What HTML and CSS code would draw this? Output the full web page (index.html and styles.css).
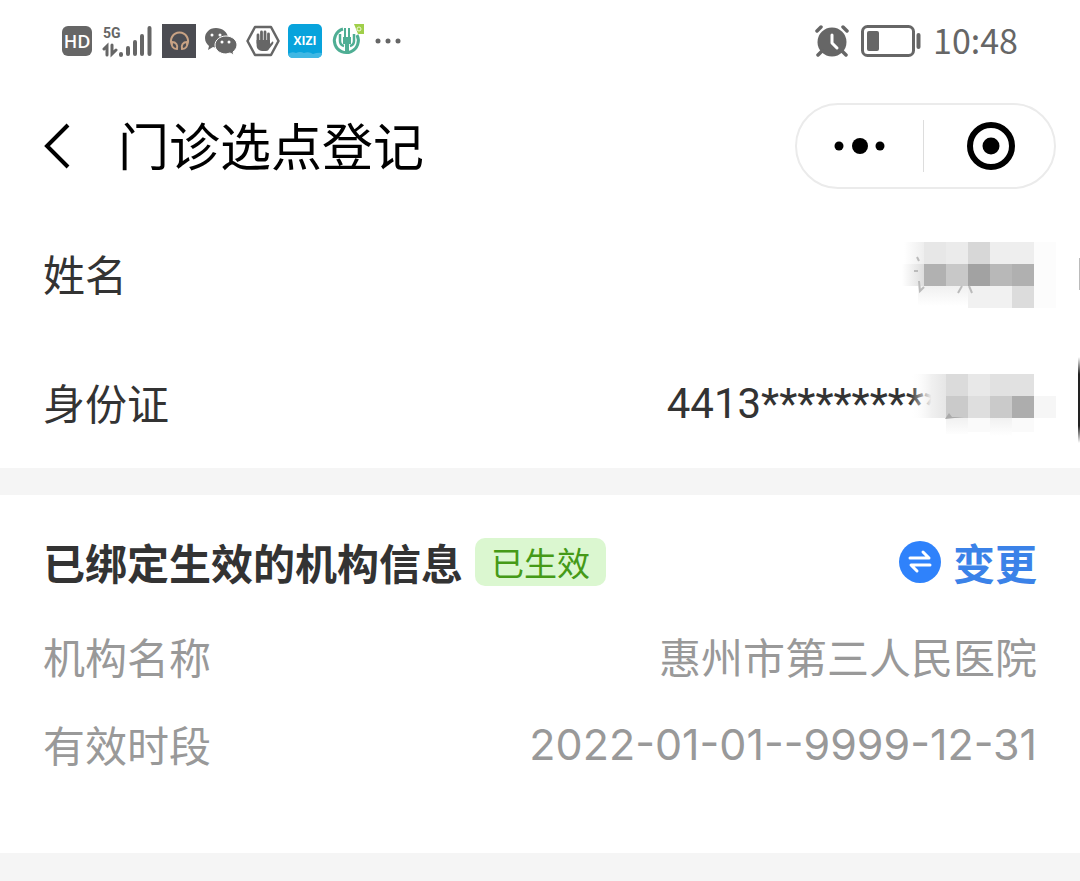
FILE: index.html
```
<!DOCTYPE html>
<html lang="zh-CN">
<head>
    <meta charset="UTF-8">
    <meta name="viewport" content="width=device-width, initial-scale=1.0">
    <title>门诊选点登记</title>
    <link rel="stylesheet" href="styles.css">
</head>

<body>
    <div class="statusbar">
        <div class="status-left">
            <svg width="30" height="30" viewBox="0 0 30 30">
                <rect width="30" height="30" rx="6" fill="#666"/>
                <text class="hd" x="15" y="22" text-anchor="middle">HD</text>
            </svg>
            <svg class="signal" width="50" height="36" viewBox="0 0 50 36">
                <text class="five-g" x="1" y="15">5G</text>
                <g fill="none" stroke="#666" stroke-linecap="round">
                    <path d="M5 32V23L2 26M10 22v9l4-4" stroke-width="3"/>
                    <path d="M19 32v-1M26 31v-6M33 31V19M40 31V13M47.500 31V5" stroke-width="4"/>
                </g>
            </svg>
            <svg width="34" height="34" viewBox="0 0 34 34">
                <rect width="34" height="34" fill="#4b4c52"/>
                <g fill="none" stroke="#c8a284" stroke-width="2">
                    <path d="M10 21a8.500 8.500 0 1 1 15 0"/>
                    <path d="M10 18c4 0 6 3 5 7c-4 0-6-3-5-7zM25 18c-4 0-6 3-5 7c4 0 6-3 5-7z"/>
                </g>
            </svg>
            <svg width="34" height="34" viewBox="0 0 34 34">
                <path fill="#666" d="M12 4C5 4 1 9 1 14c0 4 2 6 4 8l-1 4 5-3 4 1c6 0 11-4 11-10S18 4 12 4z"/>
                <path fill="#666" stroke="#fff" stroke-width="1" d="M22 12c-6 0-11 4-11 9s5 9 11 9l4-1 4 2-1-3c2-2 4-4 4-7 0-5-5-9-11-9z"/>
                <g fill="#fff">
                    <circle cx="8" cy="11" r="1.500"/>
                    <circle cx="16" cy="11" r="1.500"/>
                    <circle cx="18" cy="18" r="1.500"/>
                    <circle cx="25" cy="18" r="1.500"/>
                </g>
            </svg>
            <svg width="34" height="34" viewBox="0 0 34 34">
                <path d="M9 3h16l7.500 14L25 31H9L1.500 17z" fill="none" stroke="#666" stroke-width="2.500" stroke-linejoin="round"/>
                <path d="M12 19V11M15.500 18V8M19 18V8M22.500 19v-9" stroke="#666" stroke-width="2.800" stroke-linecap="round"/>
                <path fill="#666" d="M10.600 16h13.400v4l2-2c1-1 2 0 1 2l-4 5c-1 2-2 2-5 2-5 0-7.400-2-7.400-6z"/>
            </svg>
            <svg width="34" height="34" viewBox="0 0 34 34">
                <rect width="34" height="34" rx="5" fill="#08a3dc"/>
                <path fill="#40b8e4" d="M0 30q4-3 8-1q4-2 8 0q5-2 9 1q5-2 9-1a5 5 0 0 1-5 5H5a5 5 0 0 1-5-4z"/>
                <text class="xizi" x="17" y="21" text-anchor="middle">XIZI</text>
            </svg>
            <svg width="36" height="34" viewBox="0 0 36 34">
                <path fill="#a0cf4a" d="M24 0h10v10h-6z"/>
                <circle cx="29" cy="5" r="2" fill="none" stroke="#eef7d8"/>
                <g fill="none" stroke="#4fae94">
                    <path d="M13 5a12 12 0 1 0 14 6" stroke-width="3"/>
                    <path d="M10 10v7q0 4 4 5M24 10v7q0 4-4 5" stroke-width="2.500"/>
                    <path d="M17 19v10" stroke-width="4"/>
                    <path d="M15 4v10M19 4v10" stroke-width="2"/>
                </g>
                <path fill="#4fae94" d="M13 13h8v7h-8z"/>
            </svg>
            <svg width="28" height="34" viewBox="0 0 28 34" fill="#666">
                <circle cx="4" cy="17" r="2.500"/>
                <circle cx="14" cy="17" r="2.500"/>
                <circle cx="24" cy="17" r="2.500"/>
            </svg>
        </div>
        <div class="status-right">
            <svg width="34" height="32" viewBox="0 0 34 32">
                <circle cx="17" cy="17" r="14.500" fill="#666"/>
                <g fill="none" stroke-linecap="round">
                    <path d="M2 6l4-4M32 6l-4-4M7 26l-4 4M27 26l4 4" stroke="#666" stroke-width="3.500"/>
                    <path d="M17 10v8l5 5" stroke="#fff" stroke-width="3" stroke-linejoin="round"/>
                </g>
            </svg>
            <svg width="60" height="32" viewBox="0 0 60 32">
                <rect x="1.500" y="1.500" width="51" height="29" rx="5" fill="none" stroke="#666" stroke-width="3"/>
                <rect x="6" y="6" width="12" height="20" rx="2" fill="#666"/>
                <path d="M57.500 10v12" stroke="#666" stroke-width="4" stroke-linecap="round"/>
            </svg>
            <span class="time">10:48</span>
        </div>
    </div>

    <header class="navbar">
        <button class="back" aria-label="返回">
            <svg width="28" height="46" viewBox="0 0 28 46">
                <path d="M25 2L4 23l21 21" fill="none" stroke="#000" stroke-width="4"/>
            </svg>
        </button>
        <h1>门诊选点登记</h1>
        <div class="capsule">
            <button aria-label="更多">
                <svg width="52" height="18" viewBox="0 0 52 18">
                    <circle cx="5" cy="9" r="4.500"/>
                    <circle cx="26" cy="9" r="8"/>
                    <circle cx="46" cy="9" r="4.500"/>
                </svg>
            </button>
            <button class="close" aria-label="关闭">
                <svg width="48" height="48" viewBox="0 0 48 48">
                    <circle cx="24" cy="24" r="21" fill="none" stroke="#000" stroke-width="6"/>
                    <circle cx="24" cy="24" r="8.500"/>
                </svg>
            </button>
        </div>
    </header>

    <main>
        <dl class="person">
            <div class="row">
                <dt>姓名</dt>
                <dd>
                    <svg class="mosaic" width="154" height="66" viewBox="0 0 154 66">
                        <defs>
                            <linearGradient id="fadeLight">
                                <stop offset="0" stop-color="#fff"/>
                                <stop offset="1" stop-color="#eee"/>
                            </linearGradient>
                            <linearGradient id="fadeDark">
                                <stop offset="0" stop-color="#fff"/>
                                <stop offset="1" stop-color="#ddd"/>
                            </linearGradient>
                            <linearGradient id="fadeDown" x2="0" y2="1">
                                <stop offset="0" stop-color="#f0f0f0"/>
                                <stop offset="1" stop-color="#fff"/>
                            </linearGradient>
                        </defs>
                        <path fill="url(#fadeLight)" d="M2 0h20v22H2z"/>
                        <path fill="url(#fadeDark)" d="M0 22h22v22H0z"/>
                        <path fill="url(#fadeDown)" d="M16 44h50v20H16z"/>
                        <path fill="#e7e7e7" d="M22 0h22v22H22z"/>
                        <path fill="#ebebeb" d="M44 0h22v22H44z"/>
                        <path fill="#d7d7d7" d="M66 0h22v22H66z"/>
                        <path fill="#eee" d="M88 0h44v22H88z"/>
                        <path fill="#b1b1b1" d="M22 22h22v22H22z"/>
                        <path fill="#c8c8c8" d="M44 22h22v22H44z"/>
                        <path fill="#a2a2a2" d="M66 22h22v22H66z"/>
                        <path fill="#b8b8b8" d="M88 22h22v22H88z"/>
                        <path fill="#b0b0b0" d="M110 22h22v22h-22z"/>
                        <path fill="#f1f1f1" d="M66 44h44v22H66z"/>
                        <path fill="#dcdcdc" d="M110 44h22v22h-22z"/>
                        <path fill="#fcfcfc" d="M132 0h22v66h-22z"/>
                        <path fill="none" stroke="#bbb" stroke-width="2" d="M17 39l1 10 4-4M56 51l4-7M67 44l3 7M12 29h4M15 15l2 4"/>
                    </svg>
                </dd>
            </div>
            <div class="row row-id">
                <dt>身份证</dt>
                <dd>
                    <span class="id">4413**********</span>
                    <svg class="mosaic" width="154" height="72" viewBox="0 -6 154 72">
                        <defs>
                            <linearGradient id="cover">
                                <stop offset="0" stop-color="#fff" stop-opacity="0"/>
                                <stop offset="0.600" stop-color="#f0f0f0"/>
                                <stop offset="1" stop-color="#e6e6e6"/>
                            </linearGradient>
                            <linearGradient id="shade" x2="0" y2="1">
                                <stop offset="0" stop-color="#f1f1f1"/>
                                <stop offset="1" stop-color="#fff"/>
                            </linearGradient>
                        </defs>
                        <path fill="url(#cover)" d="M8 0h36v44H8z"/>
                        <path fill="#dbdbdb" d="M44 0h22v22H44z"/>
                        <path fill="#e8e8e8" d="M66 0h22v22H66z"/>
                        <path fill="#e1e1e1" d="M88 0h44v22H88z"/>
                        <path fill="#cacaca" d="M44 22h22v22H44z"/>
                        <path fill="#dedede" d="M66 22h22v22H66z"/>
                        <path fill="#cacaca" d="M88 22h22v22H88z"/>
                        <path fill="#adadad" d="M110 22h22v22h-22z"/>
                        <path fill="#f6f6f6" d="M132 22h22v22h-22z"/>
                        <path fill="url(#shade)" d="M44 44h22v16H44zM88 44h22v18H88z"/>
                        <path fill="#fafafa" d="M66 44h22v14H66zM110 44h22v14h-22z"/>
                        <path fill="#aaa" d="M43 45l4-6 3 4h12z"/>
                    </svg>
                </dd>
            </div>
        </dl>

        <section class="card">
            <div class="card-head">
                <h2>已绑定生效的机构信息</h2>
                <span class="badge">已生效</span>
                <button class="change">
                    <svg width="42" height="42" viewBox="0 0 42 42">
                        <circle cx="21" cy="21" r="21" fill="#2f82fb"/>
                        <path d="M11 17h19l-6-6M31 24H12l6 6" fill="none" stroke="#fff" stroke-width="3" stroke-linecap="round" stroke-linejoin="round"/>
                    </svg>
                    变更
                </button>
            </div>
            <dl class="details">
                <div class="row">
                    <dt>机构名称</dt>
                    <dd>惠州市第三人民医院</dd>
                </div>
                <div class="row">
                    <dt>有效时段</dt>
                    <dd class="period">2022-01-01--9999-12-31</dd>
                </div>
            </dl>
        </section>
    </main>
</body>
</html>
```
FILE: styles.css
```
* {
    box-sizing: border-box;
}

body {
    margin: 0;
    min-height: 100vh;
    background-color: #f5f5f5;
    color: #333;
    font-family: "Noto Sans CJK SC", sans-serif;
    font-size: 42px;
    line-height: 60px;
}

h1, h2, dl, dd {
    margin: 0;
}

button {
    display: flex;
    align-items: center;
    justify-content: center;
    padding: 0;
    border: none;
    background: none;
    font: inherit;
    cursor: pointer;
}

svg {
    display: block;
    flex-shrink: 0;
}

.statusbar {
    display: flex;
    justify-content: space-between;
    align-items: center;
    height: 82px;
    padding: 0 62px;
    background-color: #fff;
    color: #666;
}

.status-left {
    display: flex;
    align-items: center;
    gap: 8px;
}

.signal {
    margin: 0 2px;
}

.status-left text {
    font-family: "Open Sans", sans-serif;
    font-weight: 700;
}

.status-left .hd {
    font-size: 18px;
    font-weight: 600;
    fill: #fff;
}

.status-left .five-g {
    font-family: Roboto, sans-serif;
    font-size: 14px;
    fill: #666;
}

.xizi {
    font-size: 12px;
    fill: #fff;
}

.status-right {
    display: flex;
    align-items: center;
    gap: 12px;
}

.time {
    padding-bottom: 2px;
    font-size: 34px;
    line-height: 40px;
}

.navbar {
    display: flex;
    align-items: center;
    height: 128px;
    padding: 0 24px 0 43px;
    background-color: #fff;
}

.back {
    margin-right: 47px;
}

h1 {
    padding-bottom: 4px;
    color: #000;
    font-size: 51px;
    font-weight: 400;
}

.capsule {
    display: flex;
    align-items: center;
    width: 261px;
    height: 86px;
    margin-left: auto;
    border: 2px solid #ebebeb;
    border-radius: 43px;
}

.capsule button {
    flex: 1;
    height: 52px;
}

.capsule .close {
    padding-left: 4px;
    border-left: 1px solid #ddd;
}

.row {
    display: flex;
    justify-content: space-between;
    align-items: center;
}

dd {
    display: flex;
    align-items: center;
}

.person {
    background-color: #fff;
}

.person .row {
    position: relative;
    height: 129px;
    padding: 0 43px;
}

.person dt {
    padding-bottom: 4px;
}

/* sliver of the floating handle on the screen edge */
.person .row::after {
    content: "";
    position: absolute;
    top: 48px;
    right: 0;
    width: 1px;
    height: 32px;
    background-color: #bbb;
}

.person .row-id::after {
    top: 18px;
    width: 2px;
    height: 86px;
    background: linear-gradient(transparent, #222 20%, #222 80%, transparent);
}

.id {
    font-family: Roboto, sans-serif;
}

.mosaic {
    position: relative;
    margin-right: -19px;
}

.id + .mosaic {
    margin-left: -40px;
}

.card {
    margin-top: 27px;
    padding: 37px 43px 65px;
    background-color: #fff;
}

.card-head {
    display: flex;
    align-items: center;
    margin-bottom: 20px;
}

h2 {
    font-size: 42px;
    font-weight: 700;
}

.badge {
    margin-left: 12px;
    padding: 0 16px;
    border-radius: 10px;
    background-color: #dbf7d0;
    color: #459a17;
    font-size: 33px;
    line-height: 48px;
}

.change {
    gap: 12px;
    margin-left: auto;
    color: #3b82e8;
    font-weight: 700;
}

.details {
    display: flex;
    flex-direction: column;
    color: #999;
}

.details .row {
    height: 88px;
}

.period {
    font-family: Inter, sans-serif;
    font-size: 43px;
}
```
